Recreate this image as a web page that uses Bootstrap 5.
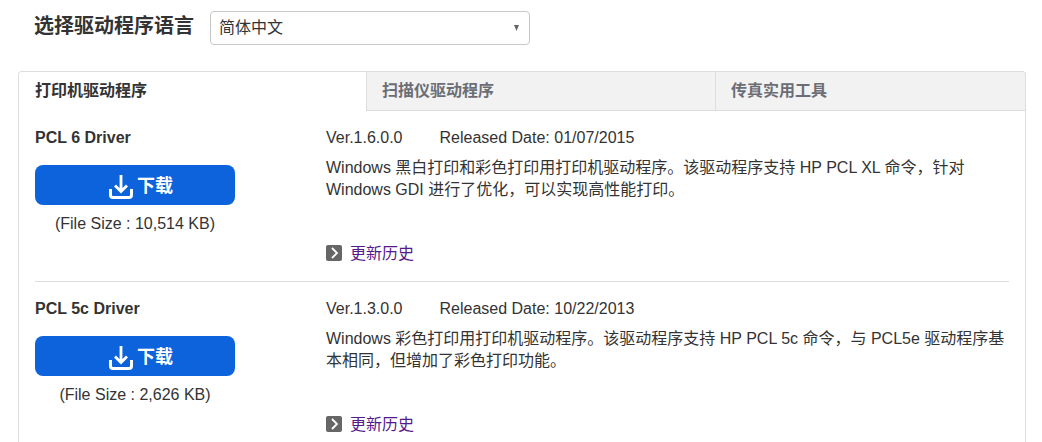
<!DOCTYPE html>
<html lang="zh-CN">
<head>
<meta charset="utf-8">
<meta name="viewport" content="width=device-width, initial-scale=1">
<title>驱动程序下载</title>
<link href="https://cdn.jsdelivr.net/npm/bootstrap@5.3.0/dist/css/bootstrap.min.css" rel="stylesheet">
<style>
  body { font: 16px/22px "Liberation Sans", "Noto Sans CJK SC", sans-serif; color: #333; background: #fff; }
  .lang-bar { padding: 11px 18px 26px 34px; gap: 16px; }
  .lang-label { font-size: 20px; line-height: 30px; font-weight: 700; }
  .lang-select {
    width: 320px; height: 34px; padding: 0 28px 0 8px; font-size: 16px; line-height: 30px; color: #333;
    border: 1px solid #c8c8c8; border-radius: 4px;
    background: #fff url("data:image/svg+xml,%3Csvg xmlns='http://www.w3.org/2000/svg' width='6' height='6'%3E%3Cpath d='M0 0h5L2.500 6z' fill='%23666'/%3E%3C/svg%3E") no-repeat right 9px center / 6px 6px;
  }
  .panel { margin: 0 16px 0 18px; border: 1px solid #ddd; border-bottom: 0; border-radius: 4px 4px 0 0; }
  .driver-tabs { border: 0; }
  .driver-tabs .nav-item { flex: 349 1 0; }
  .driver-tabs .nav-item:first-child { flex-grow: 347; }
  .driver-tabs .nav-item:last-child { flex-grow: 310; }
  .driver-tabs .nav-link {
    width: 100%; height: 39px; padding: 8px 15px; text-align: left; font-weight: 700; color: #6b6e75;
    background: #f2f2f2; border: 0; border-left: 1px solid #ddd; border-bottom: 1px solid #ddd; border-radius: 0; margin: 0;
  }
  .driver-tabs .nav-link.active { color: #333; background: #fff; border-color: transparent; }
  .driver-tabs .nav-item:first-child .nav-link { border-left-width: 0; padding-left: 16px; border-top-left-radius: 3px; }
  .driver-tabs .nav-item:last-child .nav-link { border-top-right-radius: 3px; }
  .driver { margin: 0 16px; padding: 16px 0; border-bottom: 1px solid #ddd; }
  .driver:last-child { border-bottom: 0; padding-bottom: 6px; }
  .driver-side { flex: 0 0 200px; margin-right: 91px; }
  .driver-name { font-size: 16px; line-height: 22px; font-weight: 700; margin: 0 0 16px; }
  .btn-download {
    width: 100%; height: 40px; padding: 2px 0 0 12px; gap: 4px; font-size: 18px; line-height: 24px; font-weight: 700;
    color: #fff; background: #0c63dc; border: 0; border-radius: 8px; margin-bottom: 8px;
  }
  .btn-download:hover { color: #fff; background: #0a55bd; }
  .btn-download svg { margin-top: 2px; }
  .driver-meta { gap: 37px; margin-bottom: 8px; }
  .driver-text { min-height: 44px; margin-bottom: 42px; }
  .history { color: #551a8b; gap: 8px; width: fit-content; }
  .history svg { margin-bottom: 2px; }
</style>
</head>
<body>
<svg class="d-none" xmlns="http://www.w3.org/2000/svg">
  <symbol id="i-download" viewBox="0 0 24 24">
    <path d="M1.500 14v6a2.500 2.500 0 0 0 2.500 2.500h16a2.500 2.500 0 0 0 2.500-2.500v-6" fill="none" stroke="currentColor" stroke-width="3"/>
    <path d="M12 0v16M6 10.500l6 6 6-6" fill="none" stroke="currentColor" stroke-width="2.800"/>
  </symbol>
  <symbol id="i-arrow" viewBox="0 0 16 16">
    <rect width="16" height="16" rx="2" fill="#666"/>
    <path d="M6 3L11 8 6 13" fill="none" stroke="#fff" stroke-width="1.800"/>
  </symbol>
</svg>

<div class="min-vh-100 d-flex flex-column">
  <div class="lang-bar d-flex flex-wrap align-items-start">
    <label class="lang-label" for="lang">选择驱动程序语言</label>
    <select class="form-select lang-select" id="lang">
      <option selected>简体中文</option>
      <option>English</option>
    </select>
  </div>

  <main class="panel flex-grow-1">
    <ul class="nav nav-tabs driver-tabs" role="tablist">
      <li class="nav-item" role="presentation"><button class="nav-link active" type="button" role="tab" data-bs-toggle="tab" data-bs-target="#printer" aria-controls="printer" aria-selected="true">打印机驱动程序</button></li>
      <li class="nav-item" role="presentation"><button class="nav-link" type="button" role="tab" data-bs-toggle="tab" data-bs-target="#scanner" aria-controls="scanner" aria-selected="false">扫描仪驱动程序</button></li>
      <li class="nav-item" role="presentation"><button class="nav-link" type="button" role="tab" data-bs-toggle="tab" data-bs-target="#fax" aria-controls="fax" aria-selected="false">传真实用工具</button></li>
    </ul>
    <div class="tab-content">
      <div class="tab-pane show active" id="printer" role="tabpanel">
        <article class="driver d-flex">
          <div class="driver-side">
            <h2 class="driver-name">PCL 6 Driver</h2>
            <button class="btn btn-download d-flex align-items-center justify-content-center" type="button">
              <svg width="24" height="24" aria-hidden="true"><use href="#i-download"/></svg><span>下载</span>
            </button>
            <div class="text-center">(File Size : 10,514 KB)</div>
          </div>
          <div class="flex-grow-1">
            <div class="driver-meta d-flex"><span>Ver.1.6.0.0</span><span>Released Date: 01/07/2015</span></div>
            <p class="driver-text">Windows 黑白打印和彩色打印用打印机驱动程序。该驱动程序支持 HP PCL XL 命令，针对 Windows GDI 进行了优化，可以实现高性能打印。</p>
            <a class="history d-flex align-items-center text-decoration-none" href="#"><svg width="16" height="16" aria-hidden="true"><use href="#i-arrow"/></svg>更新历史</a>
          </div>
        </article>
        <article class="driver d-flex">
          <div class="driver-side">
            <h2 class="driver-name">PCL 5c Driver</h2>
            <button class="btn btn-download d-flex align-items-center justify-content-center" type="button">
              <svg width="24" height="24" aria-hidden="true"><use href="#i-download"/></svg><span>下载</span>
            </button>
            <div class="text-center">(File Size : 2,626 KB)</div>
          </div>
          <div class="flex-grow-1">
            <div class="driver-meta d-flex"><span>Ver.1.3.0.0</span><span>Released Date: 10/22/2013</span></div>
            <p class="driver-text">Windows 彩色打印用打印机驱动程序。该驱动程序支持 HP PCL 5c 命令，与 PCL5e 驱动程序基本相同，但增加了彩色打印功能。</p>
            <a class="history d-flex align-items-center text-decoration-none" href="#"><svg width="16" height="16" aria-hidden="true"><use href="#i-arrow"/></svg>更新历史</a>
          </div>
        </article>
      </div>
      <div class="tab-pane" id="scanner" role="tabpanel"></div>
      <div class="tab-pane" id="fax" role="tabpanel"></div>
    </div>
  </main>
</div>
<script src="https://cdn.jsdelivr.net/npm/bootstrap@5.3.0/dist/js/bootstrap.bundle.min.js"></script>
</body>
</html>
